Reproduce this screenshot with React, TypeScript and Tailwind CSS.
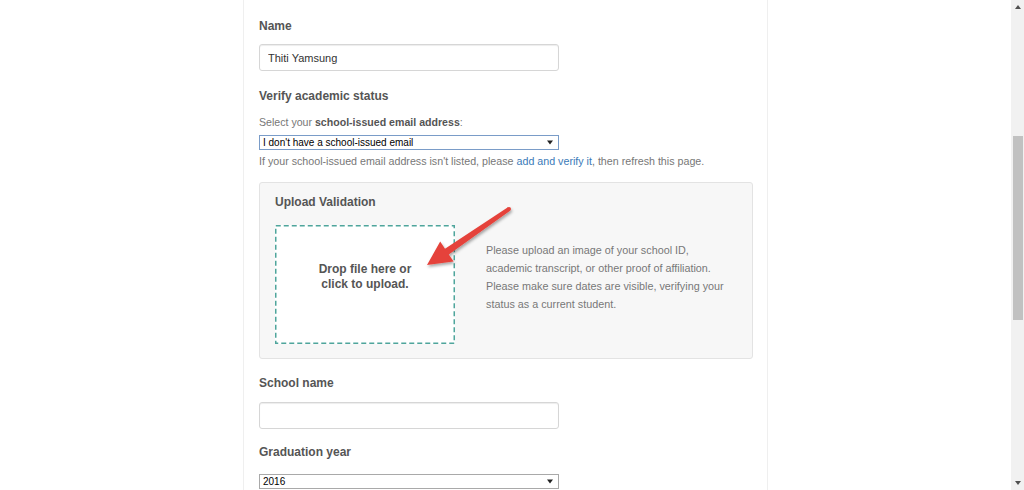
import React from 'react';

function FakeSelect({ value, focused }: { value: string; focused?: boolean }) {
  return (
    <div
      className={`flex h-[15px] w-[300px] items-center justify-between border bg-white pl-[3px] pr-[5px] text-[10px] leading-none text-black ${
        focused ? 'border-[#7a9cc8]' : 'border-[#a9a9a9]'
      }`}
    >
      <span>{value}</span>
      <svg width="6" height="5" viewBox="0 0 6 5">
        <path d="M0 0.5h6L3 4.5z" fill="#222" />
      </svg>
    </div>
  );
}

function TextInput({ value }: { value?: string }) {
  return (
    <input
      readOnly
      defaultValue={value}
      className="block h-[27px] w-[300px] rounded-[3px] border border-[#d6d6d6] bg-white px-[8px] text-[11px] text-[#333] shadow-[inset_0_1px_1px_rgba(0,0,0,0.075)] outline-none"
    />
  );
}

function Arrow() {
  return (
    <svg
      className="pointer-events-none absolute left-0 top-0"
      width="280"
      height="110"
      viewBox="0 0 280 110"
    >
      <defs>
        <filter id="arrowShadow" x="-20%" y="-20%" width="140%" height="160%">
          <feDropShadow dx="1" dy="2" stdDeviation="1.6" floodColor="#000" floodOpacity="0.35" />
        </filter>
      </defs>
      <g filter="url(#arrowShadow)" fill="#e5433b">
        <polygon points="167,82 193.6,78.6 188.8,71.5 250.1,27.7 247.9,24.3 185,65.7 180.2,58.6" />
        <circle cx="249" cy="26" r="2" />
      </g>
    </svg>
  );
}

function Scrollbar() {
  return (
    <div className="flex h-full w-[13px] shrink-0 flex-col items-center bg-[#f1f1f1]">
      <div className="flex h-[14px] w-full items-center justify-center">
        <svg width="6" height="4" viewBox="0 0 6 4">
          <path d="M3 0L6 4H0z" fill="#505050" />
        </svg>
      </div>
      <div className="mt-[122px] h-[184px] w-[10px] bg-[#c1c1c1]" />
      <div className="flex-1" />
      <div className="flex h-[14px] w-full items-center justify-center">
        <svg width="6" height="4" viewBox="0 0 6 4">
          <path d="M0 0H6L3 4z" fill="#505050" />
        </svg>
      </div>
    </div>
  );
}

export default function App() {
  return (
    <div className="flex h-[490px] w-[1024px] overflow-hidden bg-white font-['Liberation_Sans',Arial,sans-serif]">
      <div className="flex-1">
        <div className="ml-[243px] h-full w-[525px] border-x border-[#efefef] px-[15px] pt-[17px]">
          {/* Name */}
          <label className="block text-[12px] font-bold leading-[18px] text-[#555]">Name</label>
          <div className="mt-[9px]">
            <TextInput value="Thiti Yamsung" />
          </div>

          {/* Verify academic status */}
          <h3 className="mt-[16px] text-[12px] font-bold leading-[18px] text-[#555]">
            Verify academic status
          </h3>
          <p className="mt-[9px] text-[10.6px] leading-[16px] text-[#777]">
            Select your <strong className="font-bold text-[#555]">school-issued email address</strong>:
          </p>
          <div className="mt-[5px]">
            <FakeSelect value="I don't have a school-issued email" focused />
          </div>
          <p className="mt-[3px] text-[10.7px] leading-[16px] text-[#777]">
            If your school-issued email address isn't listed, please{' '}
            <a className="text-[#3a7ab8]">add and verify it</a>, then refresh this page.
          </p>

          {/* Upload panel */}
          <div className="relative mt-[13px] h-[177px] w-[494px] rounded-[3px] border border-[#e3e3e3] bg-[#f7f7f7] px-[15px] pt-[11px]">
            <h4 className="text-[12px] font-bold leading-[16px] text-[#555]">Upload Validation</h4>
            <div className="mt-[15px] flex items-start">
              <div className="relative flex h-[119px] w-[180px] shrink-0 items-center justify-center bg-white text-center text-[12px] font-bold leading-[15px] text-[#555]">
                <svg className="pointer-events-none absolute inset-0" width="180" height="119">
                  <rect
                    x="0.75"
                    y="0.75"
                    width="178.5"
                    height="117.5"
                    fill="none"
                    stroke="#4fa59c"
                    strokeWidth="1.5"
                    strokeDasharray="5 3"
                  />
                </svg>
                <span className="-mt-[16px]">
                  Drop file here or
                  <br />
                  click to upload.
                </span>
              </div>
              <p className="ml-[31px] mt-[16px] w-[250px] text-[10.8px] leading-[18px] text-[#777]">
                Please upload an image of your school ID,
                <br />
                academic transcript, or other proof of affiliation.
                <br />
                Please make sure dates are visible, verifying your
                <br />
                status as a current student.
              </p>
            </div>
            <Arrow />
          </div>

          {/* School name */}
          <label className="mt-[15px] block text-[12px] font-bold leading-[18px] text-[#555]">School name</label>
          <div className="mt-[10px]">
            <TextInput />
          </div>

          {/* Graduation year */}
          <label className="mt-[14px] block text-[12px] font-bold leading-[18px] text-[#555]">
            Graduation year
          </label>
          <div className="mt-[13px]">
            <FakeSelect value="2016" />
          </div>
        </div>
      </div>
      <Scrollbar />
    </div>
  );
}
